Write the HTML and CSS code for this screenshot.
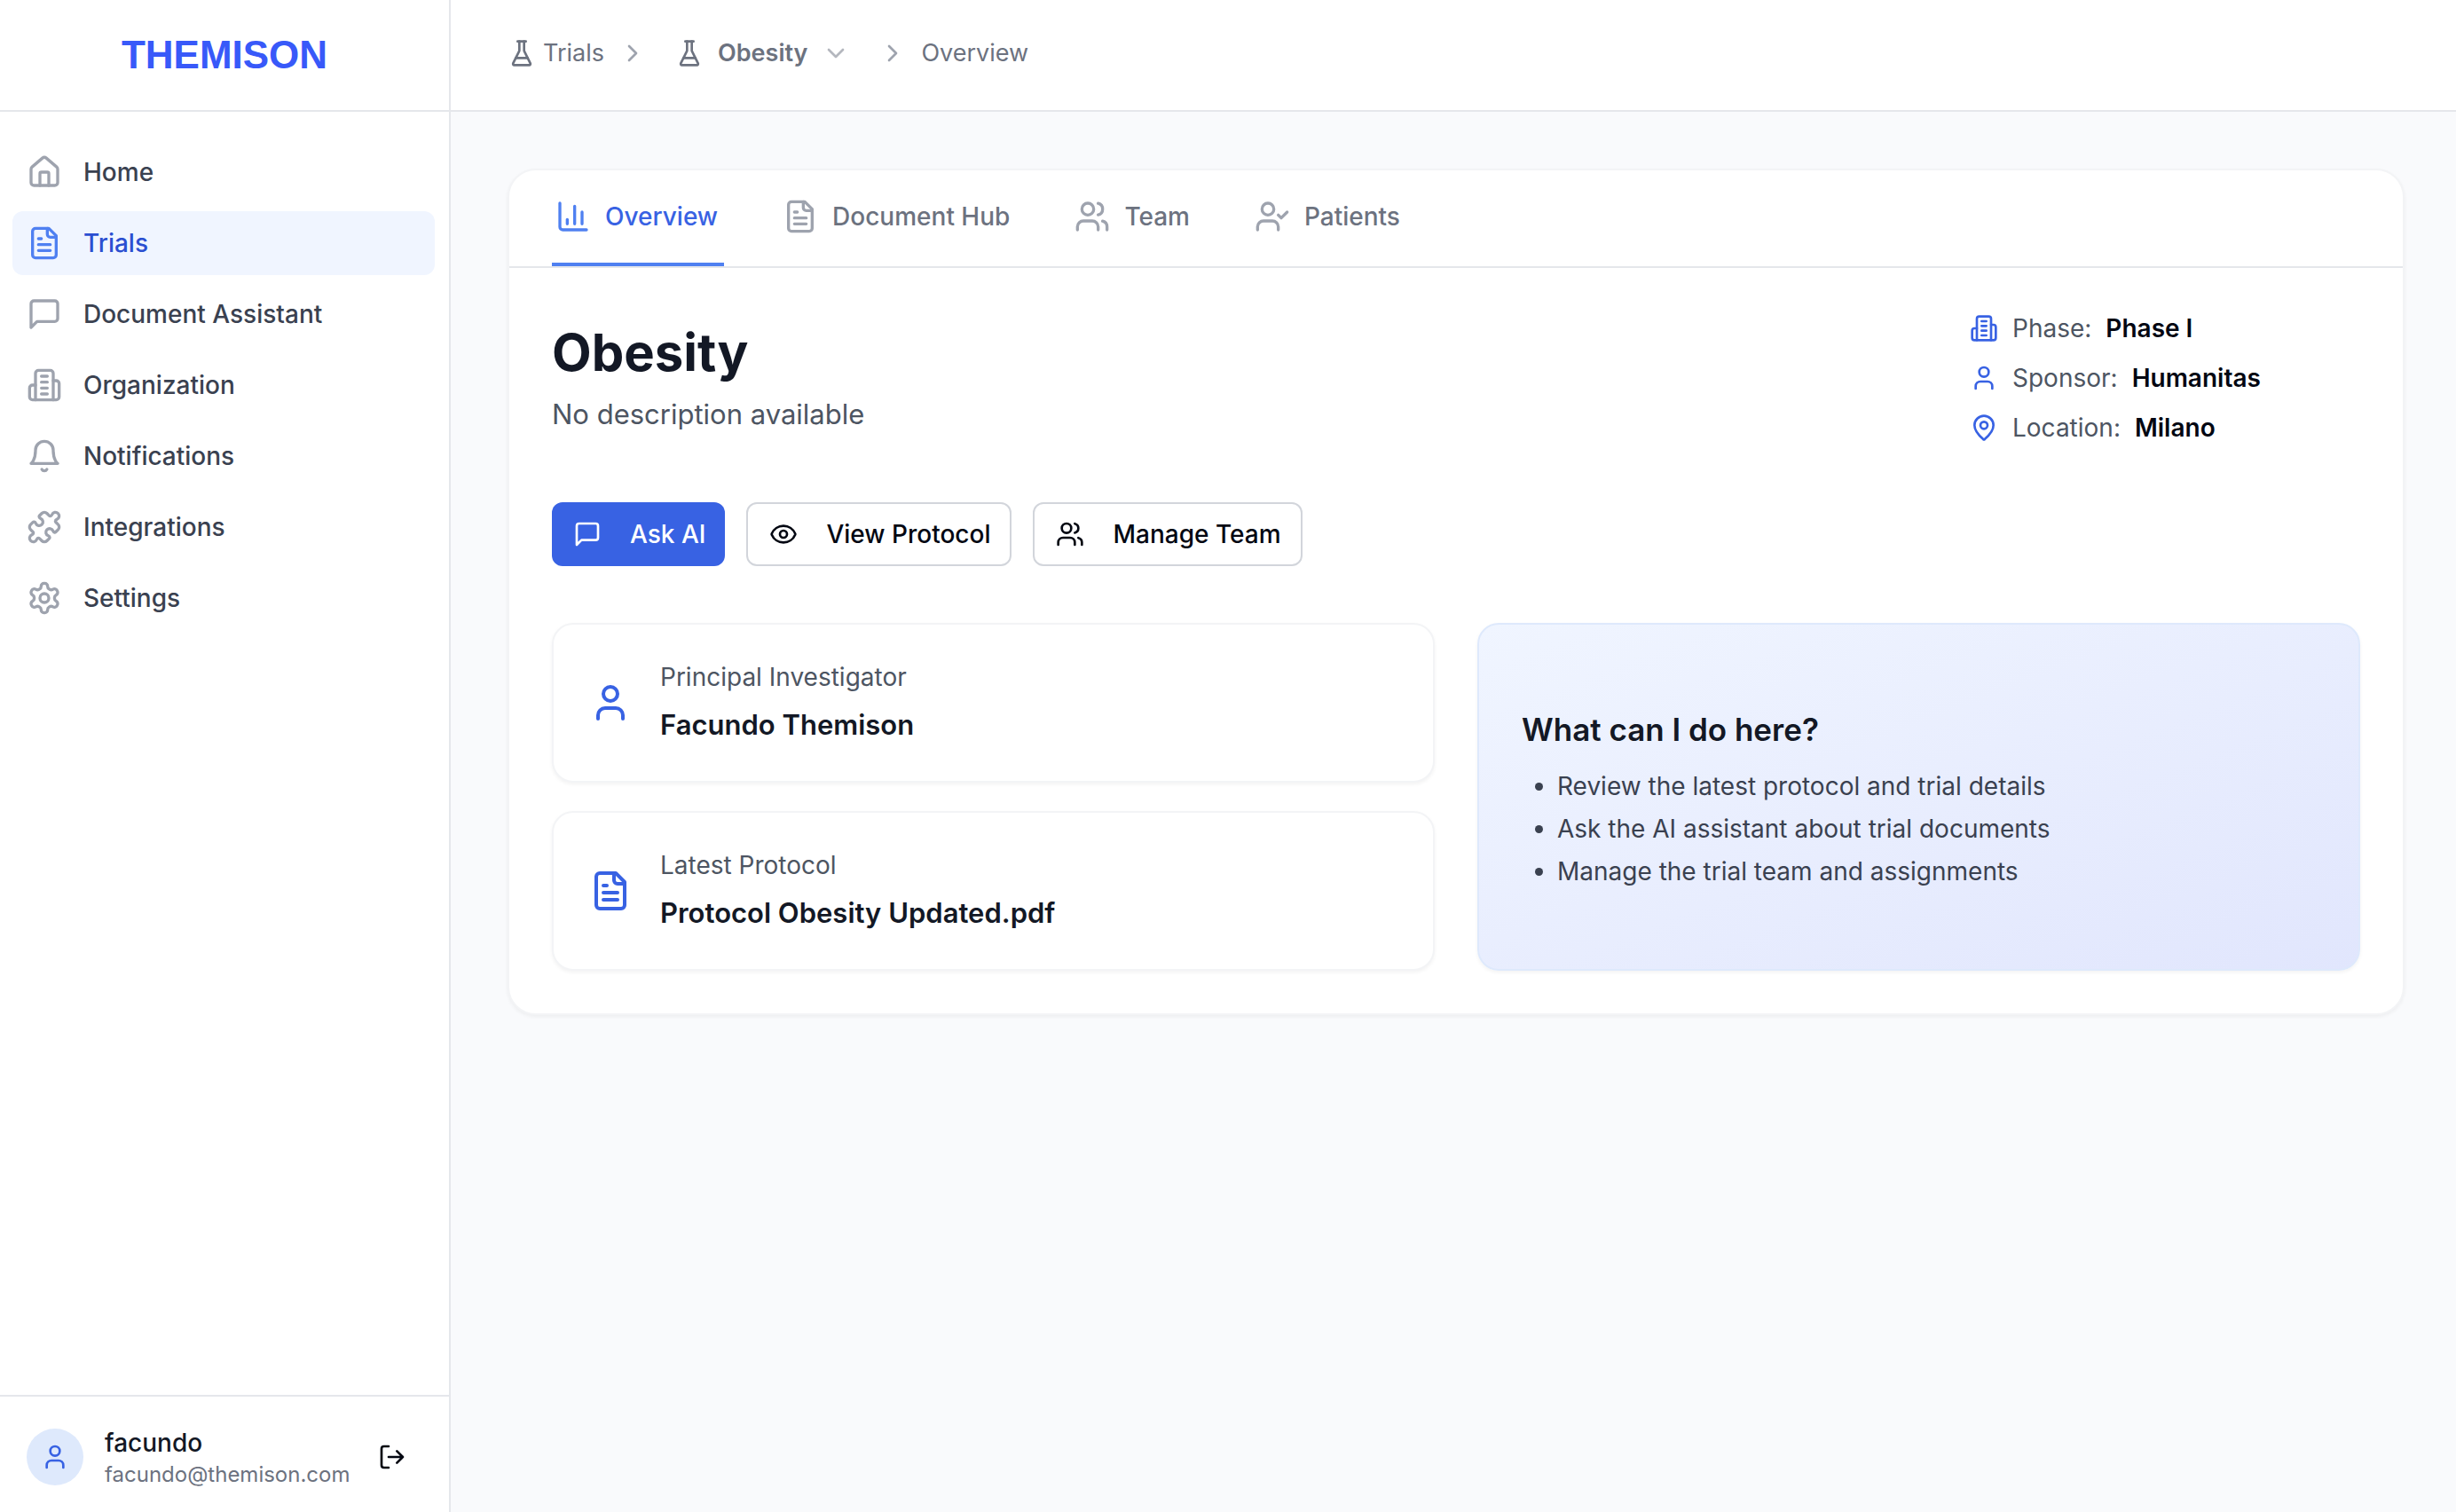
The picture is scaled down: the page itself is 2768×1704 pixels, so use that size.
FILE: index.html
```html
<!DOCTYPE html>
<html lang="en">
<head>
<meta charset="utf-8">
<meta name="viewport" content="width=device-width, initial-scale=1">
<title>Obesity – Themison</title>
<link rel="stylesheet" href="styles.css">
</head>
<body>
<svg class="sprite" aria-hidden="true">
  <symbol id="house" viewBox="0 0 24 24"><path d="M15 21v-8a1 1 0 0 0-1-1h-4a1 1 0 0 0-1 1v8"/><path d="M3 10a2 2 0 0 1 .709-1.528l7-5.999a2 2 0 0 1 2.582 0l7 5.999A2 2 0 0 1 21 10v9a2 2 0 0 1-2 2H5a2 2 0 0 1-2-2z"/></symbol>
  <symbol id="file-text" viewBox="0 0 24 24"><path d="M15 2H6a2 2 0 0 0-2 2v16a2 2 0 0 0 2 2h12a2 2 0 0 0 2-2V7Z"/><path d="M14 2v4a2 2 0 0 0 2 2h4M10 9H8M16 13H8M16 17H8"/></symbol>
  <symbol id="message" viewBox="0 0 24 24"><path d="M21 15a2 2 0 0 1-2 2H7l-4 4V5a2 2 0 0 1 2-2h14a2 2 0 0 1 2 2z"/></symbol>
  <symbol id="building" viewBox="0 0 24 24"><path d="M6 22V4a2 2 0 0 1 2-2h8a2 2 0 0 1 2 2v18Z"/><path d="M6 12H4a2 2 0 0 0-2 2v6a2 2 0 0 0 2 2h2M18 9h2a2 2 0 0 1 2 2v9a2 2 0 0 1-2 2h-2M10 6h4M10 10h4M10 14h4M10 18h4"/></symbol>
  <symbol id="bell" viewBox="0 0 24 24"><path d="M6 8a6 6 0 0 1 12 0c0 7 3 9 3 9H3s3-2 3-9"/><path d="M10.3 21a1.94 1.94 0 0 0 3.4 0"/></symbol>
  <symbol id="puzzle" viewBox="0 0 24 24"><path d="M19.439 7.85c-.049.322.059.648.289.878l1.568 1.568c.47.47.706 1.087.706 1.704s-.235 1.233-.706 1.704l-1.611 1.611a.98.98 0 0 1-.837.276c-.47-.07-.802-.48-.968-.925a2.501 2.501 0 1 0-3.214 3.214c.446.166.855.497.925.968a.979.979 0 0 1-.276.837l-1.61 1.61a2.404 2.404 0 0 1-1.705.707 2.402 2.402 0 0 1-1.704-.706l-1.568-1.568a1.026 1.026 0 0 0-.877-.29c-.493.074-.84.504-1.02.968a2.5 2.5 0 1 1-3.237-3.237c.464-.18.894-.527.967-1.02a1.026 1.026 0 0 0-.289-.877l-1.568-1.568A2.402 2.402 0 0 1 1.998 12c0-.617.236-1.234.706-1.704L4.23 8.77c.24-.24.581-.353.917-.303.515.077.877.528 1.073 1.01a2.5 2.5 0 1 0 3.259-3.259c-.482-.196-.933-.558-1.01-1.073-.05-.336.062-.676.303-.917l1.525-1.525A2.402 2.402 0 0 1 12 1.998c.617 0 1.234.236 1.704.706l1.568 1.568c.23.23.556.338.877.29.493-.074.84-.504 1.02-.968a2.5 2.5 0 1 1 3.237 3.237c-.464.18-.894.527-.967 1.02Z"/></symbol>
  <symbol id="gear" viewBox="0 0 24 24"><path d="M12.22 2h-.44a2 2 0 0 0-2 2v.18a2 2 0 0 1-1 1.73l-.43.25a2 2 0 0 1-2 0l-.15-.08a2 2 0 0 0-2.73.73l-.22.38a2 2 0 0 0 .73 2.73l.15.1a2 2 0 0 1 1 1.72v.51a2 2 0 0 1-1 1.74l-.15.09a2 2 0 0 0-.73 2.73l.22.38a2 2 0 0 0 2.73.73l.15-.08a2 2 0 0 1 2 0l.43.25a2 2 0 0 1 1 1.73V20a2 2 0 0 0 2 2h.44a2 2 0 0 0 2-2v-.18a2 2 0 0 1 1-1.73l.43-.25a2 2 0 0 1 2 0l.15.08a2 2 0 0 0 2.73-.73l.22-.39a2 2 0 0 0-.73-2.73l-.15-.08a2 2 0 0 1-1-1.74v-.5a2 2 0 0 1 1-1.74l.15-.09a2 2 0 0 0 .73-2.73l-.22-.38a2 2 0 0 0-2.73-.73l-.15.08a2 2 0 0 1-2 0l-.43-.25a2 2 0 0 1-1-1.73V4a2 2 0 0 0-2-2z"/><circle cx="12" cy="12" r="3"/></symbol>
  <symbol id="flask" viewBox="0 0 24 24"><path d="M10 2v7.527a2 2 0 0 1-.211.896L4.72 20.55a1 1 0 0 0 .9 1.45h12.76a1 1 0 0 0 .9-1.45l-5.069-10.127A2 2 0 0 1 14 9.527V2"/><path d="M8.5 2h7M7 16h10"/></symbol>
  <symbol id="chevron-right" viewBox="0 0 24 24"><path d="m9 18 6-6-6-6"/></symbol>
  <symbol id="chevron-down" viewBox="0 0 24 24"><path d="m6 9 6 6 6-6"/></symbol>
  <symbol id="chart" viewBox="0 0 24 24"><path d="M3 3v16a2 2 0 0 0 2 2h16M18 17V9M13 17V5M8 17v-3"/></symbol>
  <symbol id="user" viewBox="0 0 24 24"><path d="M19 21v-2a4 4 0 0 0-4-4H9a4 4 0 0 0-4 4v2"/><circle cx="12" cy="7" r="4"/></symbol>
  <symbol id="users" viewBox="0 0 24 24"><path d="M16 21v-2a4 4 0 0 0-4-4H6a4 4 0 0 0-4 4v2"/><circle cx="9" cy="7" r="4"/><path d="M22 21v-2a4 4 0 0 0-3-3.87M16 3.13a4 4 0 0 1 0 7.75"/></symbol>
  <symbol id="user-check" viewBox="0 0 24 24"><path d="M16 21v-2a4 4 0 0 0-4-4H6a4 4 0 0 0-4 4v2"/><circle cx="9" cy="7" r="4"/><path d="m16 11 2 2 4-4"/></symbol>
  <symbol id="map-pin" viewBox="0 0 24 24"><path d="M20 10c0 4.993-5.539 10.193-7.399 11.799a1 1 0 0 1-1.202 0C9.539 20.193 4 14.993 4 10a8 8 0 0 1 16 0"/><circle cx="12" cy="10" r="3"/></symbol>
  <symbol id="eye" viewBox="0 0 24 24"><path d="M2.062 12.348a1 1 0 0 1 0-.696 10.75 10.75 0 0 1 19.876 0 1 1 0 0 1 0 .696 10.75 10.75 0 0 1-19.876 0"/><circle cx="12" cy="12" r="3"/></symbol>
  <symbol id="log-out" viewBox="0 0 24 24"><path d="m16 17 5-5-5-5M21 12H9M9 21H5a2 2 0 0 1-2-2V5a2 2 0 0 1 2-2h4"/></symbol>
</svg>

<div class="app">
  <aside class="sidebar">
    <div class="brand"><a class="logo" href="#">THEMISON</a></div>
    <nav class="nav" aria-label="Main">
      <a class="nav-item" href="#"><svg class="icon icon-md"><use href="#house"/></svg>Home</a>
      <a class="nav-item nav-item-active" href="#" aria-current="page"><svg class="icon icon-md"><use href="#file-text"/></svg>Trials</a>
      <a class="nav-item" href="#"><svg class="icon icon-md"><use href="#message"/></svg>Document Assistant</a>
      <a class="nav-item" href="#"><svg class="icon icon-md"><use href="#building"/></svg>Organization</a>
      <a class="nav-item" href="#"><svg class="icon icon-md"><use href="#bell"/></svg>Notifications</a>
      <a class="nav-item" href="#"><svg class="icon icon-md"><use href="#puzzle"/></svg>Integrations</a>
      <a class="nav-item" href="#"><svg class="icon icon-md"><use href="#gear"/></svg>Settings</a>
    </nav>
    <div class="account">
      <span class="avatar"><svg class="icon"><use href="#user"/></svg></span>
      <div class="account-text">
        <div class="account-name">facundo</div>
        <div class="account-email">facundo@themison.com</div>
      </div>
      <button class="logout" type="button" aria-label="Log out"><svg class="icon"><use href="#log-out"/></svg></button>
    </div>
  </aside>

  <div class="page">
    <header class="topbar">
      <nav class="crumbs" aria-label="Breadcrumb">
        <a class="crumb" href="#"><svg class="icon"><use href="#flask"/></svg>Trials</a>
        <svg class="icon crumb-sep"><use href="#chevron-right"/></svg>
        <button class="crumb-switch" type="button"><svg class="icon"><use href="#flask"/></svg>Obesity<svg class="icon crumb-caret"><use href="#chevron-down"/></svg></button>
        <svg class="icon crumb-sep"><use href="#chevron-right"/></svg>
        <span class="crumb">Overview</span>
      </nav>
    </header>

    <main class="main">
      <section class="panel">
        <div class="tabs" role="tablist">
          <button class="tab tab-active" type="button" role="tab" aria-selected="true"><svg class="icon icon-md"><use href="#chart"/></svg>Overview</button>
          <button class="tab" type="button" role="tab" aria-selected="false"><svg class="icon icon-md"><use href="#file-text"/></svg>Document Hub</button>
          <button class="tab" type="button" role="tab" aria-selected="false"><svg class="icon icon-md"><use href="#users"/></svg>Team</button>
          <button class="tab" type="button" role="tab" aria-selected="false"><svg class="icon icon-md"><use href="#user-check"/></svg>Patients</button>
        </div>

        <div class="content">
          <div class="intro">
            <div class="intro-text">
              <h1 class="title">Obesity</h1>
              <p class="description">No description available</p>
            </div>
            <dl class="facts">
              <div class="fact"><svg class="icon"><use href="#building"/></svg><dt>Phase:</dt><dd>Phase I</dd></div>
              <div class="fact"><svg class="icon"><use href="#user"/></svg><dt>Sponsor:</dt><dd>Humanitas</dd></div>
              <div class="fact"><svg class="icon"><use href="#map-pin"/></svg><dt>Location:</dt><dd>Milano</dd></div>
            </dl>
          </div>

          <div class="actions">
            <button class="button button-primary" type="button"><svg class="icon"><use href="#message"/></svg>Ask AI</button>
            <button class="button" type="button"><svg class="icon"><use href="#eye"/></svg>View Protocol</button>
            <button class="button" type="button"><svg class="icon"><use href="#users"/></svg>Manage Team</button>
          </div>

          <div class="columns">
            <div class="stack">
              <article class="card">
                <svg class="icon icon-lg"><use href="#user"/></svg>
                <div class="card-text">
                  <div class="card-label">Principal Investigator</div>
                  <div class="card-value">Facundo Themison</div>
                </div>
              </article>
              <article class="card">
                <svg class="icon icon-lg"><use href="#file-text"/></svg>
                <div class="card-text">
                  <div class="card-label">Latest Protocol</div>
                  <div class="card-value">Protocol Obesity Updated.pdf</div>
                </div>
              </article>
            </div>
            <article class="help">
              <h2 class="help-title">What can I do here?</h2>
              <ul class="help-list">
                <li>Review the latest protocol and trial details</li>
                <li>Ask the AI assistant about trial documents</li>
                <li>Manage the trial team and assignments</li>
              </ul>
            </article>
          </div>
        </div>
      </section>
    </main>
  </div>
</div>
</body>
</html>
```
FILE: styles.css
```css
*, *::before, *::after { box-sizing: border-box; }

body {
  margin: 0;
  font-family: Inter, "Liberation Sans", sans-serif;
  font-size: 28px;
  line-height: 40px;
  color: #030712;
  background: #f9fafc;
}

h1, h2, p, ul, dl, dd { margin: 0; padding: 0; }
a { color: inherit; text-decoration: none; }
button {
  margin: 0;
  padding: 0;
  border: 0;
  background: none;
  color: inherit;
  font: inherit;
  cursor: pointer;
}

.sprite { display: none; }
.icon {
  flex: none;
  width: 32px;
  height: 32px;
  fill: none;
  stroke: currentColor;
  stroke-width: 2;
  stroke-linecap: round;
  stroke-linejoin: round;
}
.icon-md { width: 40px; height: 40px; }
.icon-lg { width: 48px; height: 48px; }

.app { display: flex; min-height: 100vh; }

/* Sidebar */
.sidebar {
  display: flex;
  flex-direction: column;
  flex: none;
  width: 508px;
  background: #fff;
  border-right: 2px solid #e5e7eb;
}
.brand {
  display: flex;
  align-items: center;
  justify-content: center;
  height: 126px;
  border-bottom: 2px solid #e5e7eb;
}
.logo {
  font-family: "Liberation Sans", Arial, sans-serif;
  font-size: 44px;
  line-height: 48px;
  font-weight: 700;
  color: #3859f9;
}
.nav {
  display: flex;
  flex-direction: column;
  flex: 1;
  gap: 8px;
  padding: 32px 16px 32px 14px;
}
.nav-item {
  display: flex;
  align-items: center;
  gap: 24px;
  padding: 16px;
  border-radius: 12px;
  font-weight: 500;
  color: #3a4150;
}
.nav-item .icon { color: #9ea3ae; }
.nav-item-active { background: #f0f5ff; color: #2b4fd1; }
.nav-item-active .icon { color: #4f80f1; }

.account {
  display: flex;
  align-items: center;
  gap: 24px;
  padding: 32px 32px 26px 30px;
  border-top: 2px solid #e5e7eb;
}
.avatar {
  display: flex;
  align-items: center;
  justify-content: center;
  flex: none;
  width: 64px;
  height: 64px;
  border-radius: 50%;
  background: #dee9fc;
  color: #3862e3;
}
.account-text { flex: 1; min-width: 0; }
.account-name { font-weight: 500; color: #131825; }
.account-email { font-size: 24px; line-height: 32px; color: #6c727f; }
.logout { display: flex; padding: 16px; margin-left: -24px; }

/* Header */
.page { flex: 1; min-width: 0; }
.topbar {
  display: flex;
  align-items: center;
  height: 126px;
  padding: 0 64px 4px;
  background: #fff;
  border-bottom: 2px solid #e5e7eb;
}
.crumbs {
  display: flex;
  align-items: center;
  gap: 16px;
  font-size: 27px;
  color: #6c727f;
}
.crumb { display: flex; align-items: center; gap: 8px; }
.crumb-sep { color: #9ea3ae; }
.crumb-switch {
  display: flex;
  align-items: center;
  gap: 16px;
  padding: 0 16px;
  font-weight: 600;
}
.crumb-caret { opacity: 0.5; }

/* Trial panel */
.main { padding: 64px 58px 64px 64px; }
.panel {
  background: #fff;
  border: 2px solid #f3f4f6;
  border-radius: 32px;
  box-shadow: 0 2px 4px rgba(0, 0, 0, 0.05);
}
.tabs {
  display: flex;
  gap: 62px;
  padding: 0 48px;
  border-bottom: 2px solid #e5e7eb;
}
.tab {
  display: flex;
  align-items: center;
  gap: 16px;
  padding: 32px 7px 32px 4px;
  border-bottom: 4px solid transparent;
  font-weight: 500;
  color: #6c727f;
}
.tab .icon { color: #9ea3ae; }
.tab-active { border-color: #4f80f1; color: #3862e3; }
.tab-active .icon { color: #4f80f1; }

.content {
  display: flex;
  flex-direction: column;
  gap: 64px;
  padding: 48px;
}
.intro {
  display: flex;
  align-items: center;
  justify-content: space-between;
}
.intro-text { display: flex; flex-direction: column; gap: 10px; }
.title { font-size: 58px; line-height: 72px; font-weight: 700; color: #131825; }
.description { font-size: 31px; line-height: 48px; color: #4d5562; }
.facts {
  display: flex;
  flex-direction: column;
  gap: 16px;
  width: 440px;
}
.fact { display: flex; align-items: center; gap: 16px; }
.fact .icon { color: #3862e3; }
.fact dt { color: #4d5562; }
.fact dd { font-weight: 600; }

.actions { display: flex; gap: 24px; }
.button {
  display: flex;
  align-items: center;
  gap: 32px;
  padding: 14px 22px 14px 24px;
  border: 2px solid #d2d5db;
  border-radius: 12px;
  background: #fff;
  font-weight: 500;
}
.button-primary {
  padding: 16px 22px 16px 24px;
  border: 0;
  background: #3862e3;
  color: #fff;
}

.columns { display: grid; grid-template-columns: 1fr 1fr; gap: 48px; }
.stack { display: flex; flex-direction: column; gap: 32px; }
.card {
  display: flex;
  align-items: center;
  gap: 32px;
  padding: 39px 40px;
  border: 2px solid #f3f4f6;
  border-radius: 24px;
  background: #fff;
  box-shadow: 0 2px 4px rgba(0, 0, 0, 0.05);
}
.card .icon { color: #3862e3; }
.card-text { display: flex; flex-direction: column; gap: 10px; }
.card-label { color: #4d5562; }
.card-value { font-size: 31px; line-height: 48px; font-weight: 600; color: #131825; }

.help {
  display: flex;
  flex-direction: column;
  justify-content: center;
  gap: 16px;
  padding: 48px;
  border: 2px solid #dee9fc;
  border-radius: 24px;
  background: linear-gradient(to bottom right, #f0f5ff, #e1e6fd);
  box-shadow: 0 2px 4px rgba(0, 0, 0, 0.05);
}
.help-title { font-size: 35px; line-height: 56px; font-weight: 600; color: #131825; }
.help-list {
  display: flex;
  flex-direction: column;
  gap: 8px;
  padding-left: 40px;
  color: #3a4150;
}
```
